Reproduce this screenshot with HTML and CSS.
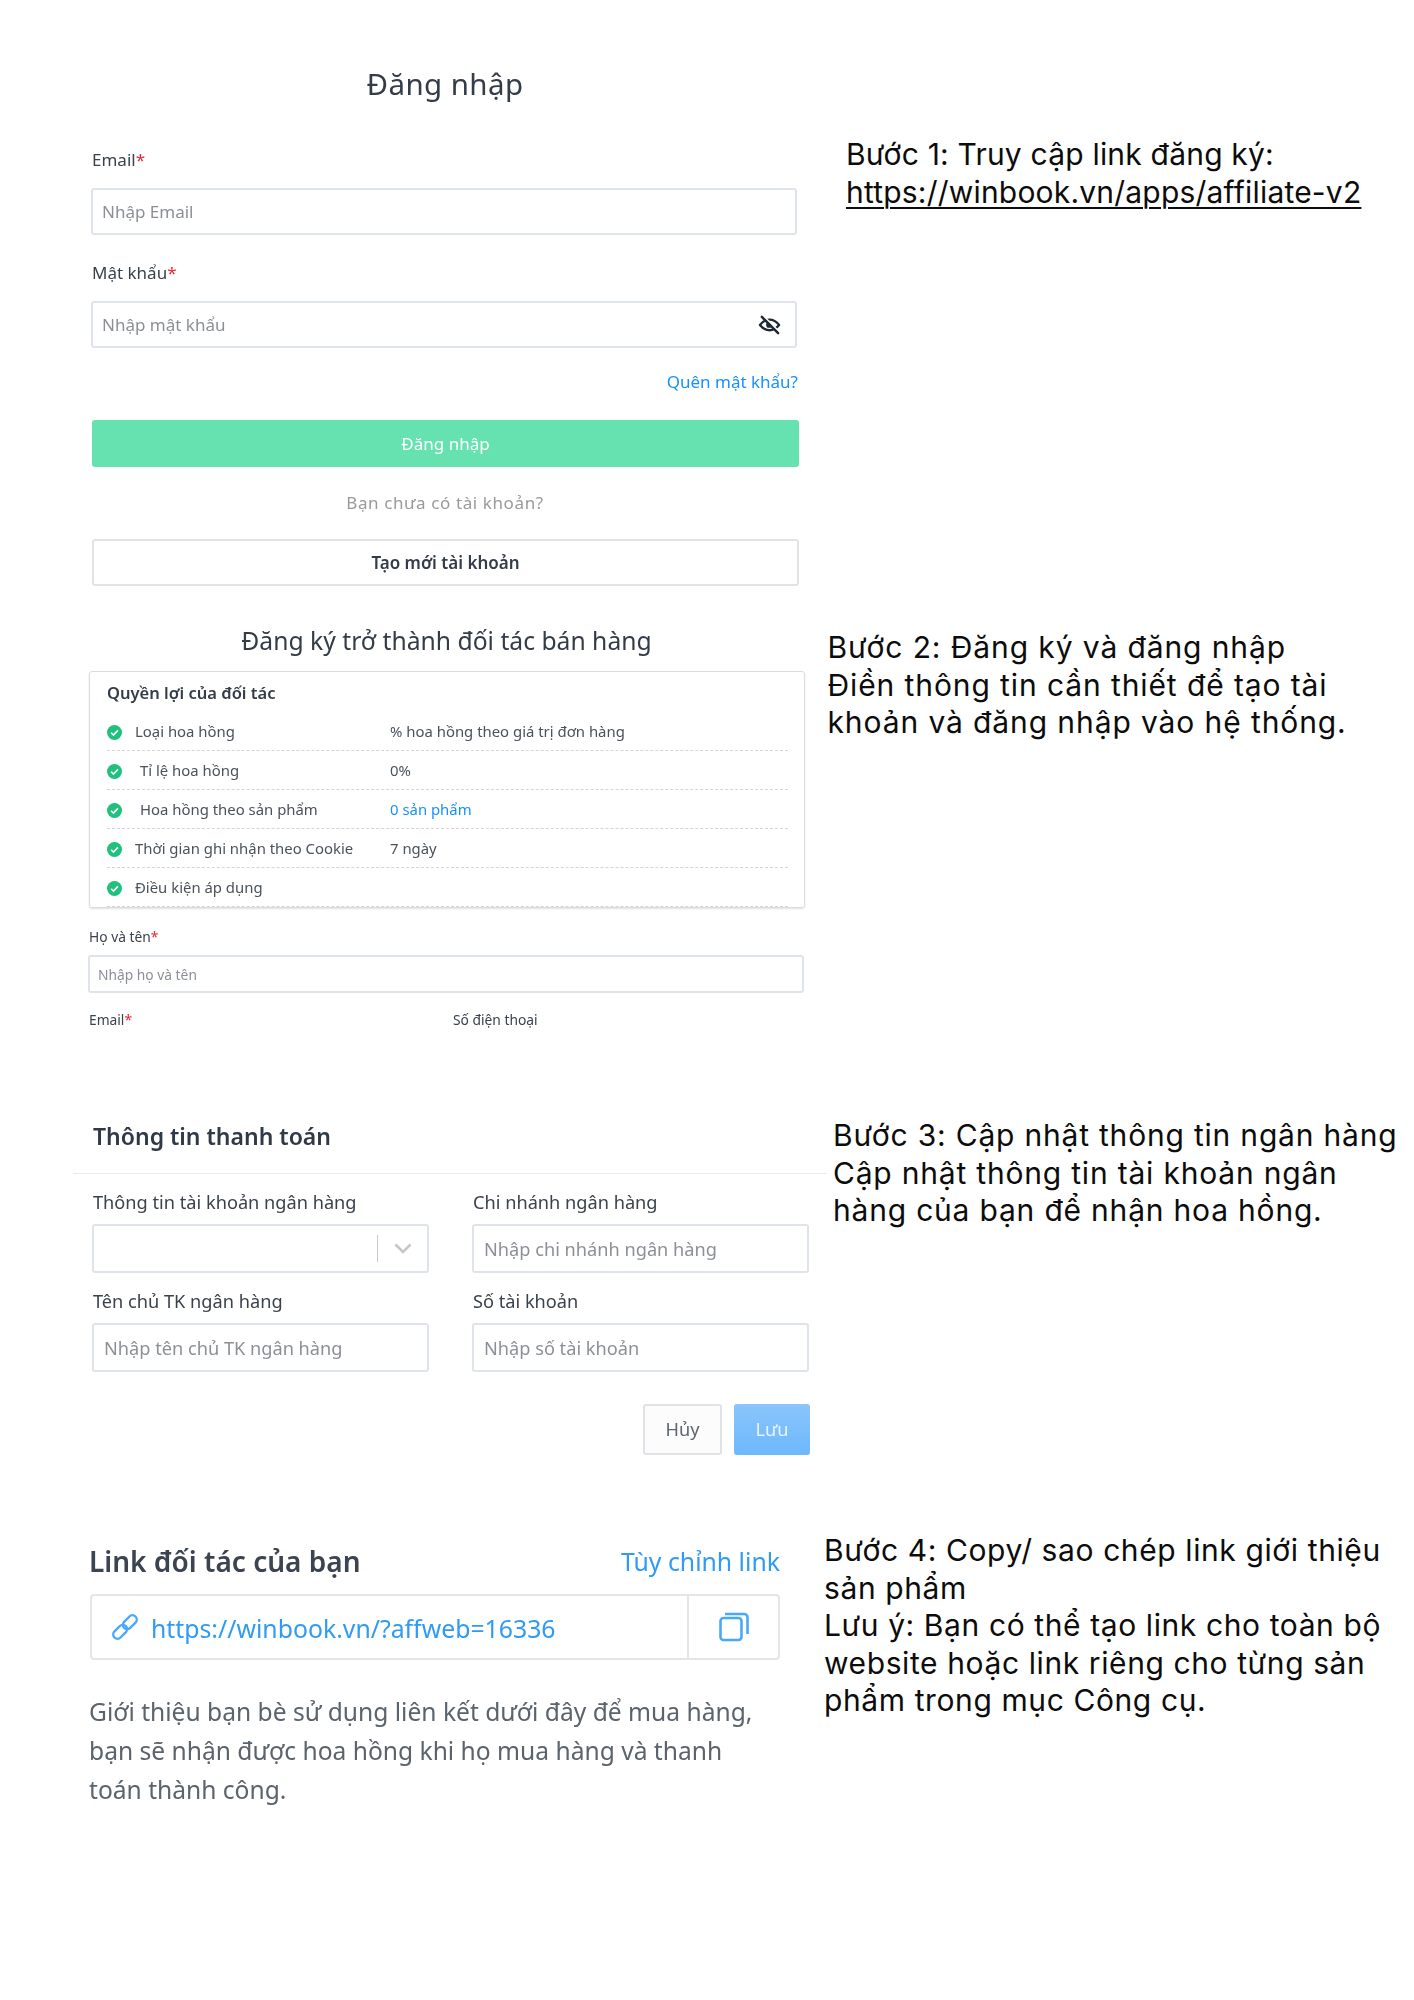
FILE: index.html
```html
<!DOCTYPE html>
<html lang="vi">
<head>
<meta charset="utf-8">
<title>Hướng dẫn đăng ký đối tác</title>
<link rel="stylesheet" href="styles.css">
</head>
<body>
<main class="page">

  <section class="step step-one">
    <div class="login">
      <h1 class="login-title">Đăng nhập</h1>
      <div class="label login-label first">Email<span class="req">*</span></div>
      <div class="field login-field">Nhập Email</div>
      <div class="label login-label">Mật khẩu<span class="req">*</span></div>
      <div class="field login-field with-icon">
        <span>Nhập mật khẩu</span>
        <svg class="eye" viewBox="0 0 24 24" width="23" height="23" fill="none" stroke-linecap="round" stroke-linejoin="round"><path d="M2 12.500c3-3.800 6.300-5.500 10-5.500s7 1.700 10 5.500c-3 3.800-6.300 5.500-10 5.500S5 16.300 2 12.500z" stroke="#1f2933" stroke-width="2.400"/><circle cx="11.500" cy="12.500" r="3" fill="#1f2933"/><path d="M6 3.500l16 16" stroke="#fff" stroke-width="2"/><path d="M4 4l17 17" stroke="#1f2933" stroke-width="2.600"/></svg>
      </div>
      <div class="forgot"><a class="link">Quên mật khẩu?</a></div>
      <div class="btn-primary">Đăng nhập</div>
      <div class="no-account">Bạn chưa có tài khoản?</div>
      <div class="btn-outline">Tạo mới tài khoản</div>
    </div>
    <div class="step-text text-one">
      <p>Bước 1: Truy cập link đăng ký:</p>
      <p class="underline">https://winbook.vn/apps/affiliate-v2</p>
    </div>
  </section>

  <section class="step step-two">
    <div class="register">
      <h2 class="register-title">Đăng ký trở thành đối tác bán hàng</h2>
      <div class="benefits">
        <h3 class="benefits-title">Quyền lợi của đối tác</h3>
        <div class="benefit">
          <svg class="check" viewBox="0 0 14 14" width="15" height="15"><circle cx="7" cy="7" r="7" fill="#20c17c"/><path d="M3.800 7.200l2.200 2.200 4.200-4.400" fill="none" stroke="#fff" stroke-width="1.500"/></svg>
          <span class="benefit-name">Loại hoa hồng</span>
          <span class="benefit-value">% hoa hồng theo giá trị đơn hàng</span>
        </div>
        <div class="benefit">
          <svg class="check" viewBox="0 0 14 14" width="15" height="15"><circle cx="7" cy="7" r="7" fill="#20c17c"/><path d="M3.800 7.200l2.200 2.200 4.200-4.400" fill="none" stroke="#fff" stroke-width="1.500"/></svg>
          <span class="benefit-name indent">Tỉ lệ hoa hồng</span>
          <span class="benefit-value">0%</span>
        </div>
        <div class="benefit">
          <svg class="check" viewBox="0 0 14 14" width="15" height="15"><circle cx="7" cy="7" r="7" fill="#20c17c"/><path d="M3.800 7.200l2.200 2.200 4.200-4.400" fill="none" stroke="#fff" stroke-width="1.500"/></svg>
          <span class="benefit-name indent">Hoa hồng theo sản phẩm</span>
          <a class="benefit-value link">0 sản phẩm</a>
        </div>
        <div class="benefit">
          <svg class="check" viewBox="0 0 14 14" width="15" height="15"><circle cx="7" cy="7" r="7" fill="#20c17c"/><path d="M3.800 7.200l2.200 2.200 4.200-4.400" fill="none" stroke="#fff" stroke-width="1.500"/></svg>
          <span class="benefit-name">Thời gian ghi nhận theo Cookie</span>
          <span class="benefit-value">7 ngày</span>
        </div>
        <div class="benefit">
          <svg class="check" viewBox="0 0 14 14" width="15" height="15"><circle cx="7" cy="7" r="7" fill="#20c17c"/><path d="M3.800 7.200l2.200 2.200 4.200-4.400" fill="none" stroke="#fff" stroke-width="1.500"/></svg>
          <span class="benefit-name">Điều kiện áp dụng</span>
        </div>
      </div>
      <div class="label small-label name-label">Họ và tên<span class="req">*</span></div>
      <div class="field small-field">Nhập họ và tên</div>
      <div class="split-labels">
        <div class="label small-label">Email<span class="req">*</span></div>
        <div class="label small-label">Số điện thoại</div>
      </div>
    </div>
    <div class="step-text text-two">
      <p>Bước 2: Đăng ký và đăng nhập</p>
      <p>Điền thông tin cần thiết để tạo tài</p>
      <p>khoản và đăng nhập vào hệ thống.</p>
    </div>
  </section>

  <section class="step step-three">
    <div class="payment">
      <h2 class="payment-title">Thông tin thanh toán</h2>
      <div class="payment-grid">
        <div class="pay-item">
          <div class="label pay-label">Thông tin tài khoản ngân hàng</div>
          <div class="field pay-field select">
            <span class="select-divider"></span>
            <svg class="chevron" viewBox="0 0 18 11" width="18" height="11" fill="none" stroke="#c6c6c6" stroke-width="2.600"><path d="M1.500 1.500L9 9l7.500-7.500"/></svg>
          </div>
        </div>
        <div class="pay-item">
          <div class="label pay-label">Chi nhánh ngân hàng</div>
          <div class="field pay-field">Nhập chi nhánh ngân hàng</div>
        </div>
        <div class="pay-item">
          <div class="label pay-label">Tên chủ TK ngân hàng</div>
          <div class="field pay-field">Nhập tên chủ TK ngân hàng</div>
        </div>
        <div class="pay-item">
          <div class="label pay-label">Số tài khoản</div>
          <div class="field pay-field">Nhập số tài khoản</div>
        </div>
      </div>
      <div class="pay-actions">
        <div class="btn-cancel">Hủy</div>
        <div class="btn-save">Lưu</div>
      </div>
    </div>
    <div class="step-text text-three">
      <p>Bước 3: Cập nhật thông tin ngân hàng</p>
      <p>Cập nhật thông tin tài khoản ngân</p>
      <p>hàng của bạn để nhận hoa hồng.</p>
    </div>
  </section>

  <section class="step step-four">
    <div class="partner">
      <div class="partner-head">
        <h2 class="partner-title">Link đối tác của bạn</h2>
        <a class="link customize">Tùy chỉnh link</a>
      </div>
      <div class="partner-box">
        <div class="partner-url">
          <svg viewBox="0 0 28 28" width="30" height="30" fill="none" stroke="#4aa8fb" stroke-width="2.200"><rect x="11" y="5.500" width="15" height="8" rx="4" transform="rotate(-45 18.500 9.500)"/><rect x="2" y="14.500" width="15" height="8" rx="4" transform="rotate(-45 9.500 18.500)"/></svg>
          <a class="link url-text">https://winbook.vn/?affweb=16336</a>
        </div>
        <div class="partner-copy">
          <svg viewBox="0 0 32 32" width="32" height="32" fill="none" stroke="#4aa8fb" stroke-width="2.600" stroke-linejoin="round"><rect x="2.500" y="7" width="21" height="22" rx="3"/><path d="M7 3h19a3.500 3.500 0 0 1 3.500 3.500V23"/></svg>
        </div>
      </div>
      <p class="partner-note">Giới thiệu bạn bè sử dụng liên kết dưới đây để mua hàng,<br>bạn sẽ nhận được hoa hồng khi họ mua hàng và thanh<br>toán thành công.</p>
    </div>
    <div class="step-text text-four">
      <p>Bước 4: Copy/ sao chép link giới thiệu</p>
      <p>sản phẩm</p>
      <p>Lưu ý: Bạn có thể tạo link cho toàn bộ</p>
      <p>website hoặc link riêng cho từng sản</p>
      <p>phẩm trong mục Công cụ.</p>
    </div>
  </section>

</main>
</body>
</html>
```
FILE: styles.css
```css
* { box-sizing: border-box; }
html, body { margin: 0; padding: 0; background: #fff; }
body { font-family: "Noto Sans", "Liberation Sans", sans-serif; color: #3a424c; }
h1, h2, h3, p { margin: 0; font-weight: 400; }

.page { width: 1414px; height: 2000px; overflow: hidden; }
.step { display: flex; align-items: flex-start; }
.step-one { height: 610px; }
.step-two { height: 480px; }
.step-three { height: 410px; }
.step-four { height: 500px; }

.step-text { font-family: "Inter", "Noto Sans", sans-serif; font-size: 30px; line-height: 37.5px; color: #0c0c0c; white-space: nowrap; letter-spacing: 0.2px; }
.underline { text-decoration: underline; text-decoration-thickness: 2px; text-underline-offset: 4px; }
.text-one { margin-left: 47px; padding-top: 136px; }
.text-two { margin-left: 22.5px; padding-top: 19px; letter-spacing: 0.9px; }
.text-three { margin-left: 6px; padding-top: 27px; letter-spacing: 0.8px; }
.text-four { margin-left: 44px; padding-top: 32px; letter-spacing: 0.6px; }

.login, .register, .payment { filter: blur(0.35px); }
.partner { filter: blur(0.55px); }

.label { color: #3a424c; }
.req { color: #f5222d; }
.link { color: #1890ff; text-decoration: none; }

.field { display: flex; align-items: center; background: #fff; border: 2px solid #dfe3ea; border-radius: 3px; color: #8c9096; }

/* login */
.login { width: 708px; margin-left: 91px; padding-top: 63px; }
.login-title { font-size: 29.5px; line-height: 42px; text-align: center; color: #333c48; letter-spacing: 0.4px; }
.login-label { padding-left: 1px; font-size: 17px; line-height: 22px; margin: 27px 0 17px; }
.login-label.first { margin-top: 44px; }
.login-field { height: 47px; margin-right: 2px; padding-left: 9px; font-size: 17px; }
.with-icon { justify-content: space-between; padding-right: 14px; }
.forgot { margin-top: 23px; padding-right: 1px; font-size: 17px; line-height: 22px; text-align: right; }
.btn-primary { height: 47px; margin: 27px 0 0 1px; background: #66e2b0; border-radius: 3px; color: #fff; font-size: 17px; line-height: 47px; text-align: center; }
.no-account { margin-top: 25px; font-size: 17px; line-height: 22px; text-align: center; color: #9a9a9a; letter-spacing: 0.6px; }
.btn-outline { height: 47px; margin: 25px 0 0 1px; border: 2px solid #e2e3e6; border-radius: 3px; font-size: 17px; font-weight: 600; line-height: 44px; text-align: center; color: #333c48; }

/* register */
.register { width: 717px; margin-left: 88px; padding-top: 11px; }
.register-title { font-size: 24.7px; line-height: 40px; text-align: center; color: #333c48; }
.benefits { height: 237px; margin: 10px 0 0 1px; padding: 10px 16px 0 17px; border: 1px solid #dcdcdc; border-radius: 3px; box-shadow: 0 1px 2px rgba(0, 0, 0, .12); overflow: hidden; }
.benefits-title { margin-bottom: 8px; font-size: 16.5px; font-weight: 600; line-height: 22px; color: #333c48; }
.benefit { display: flex; align-items: center; height: 39px; border-bottom: 1px dashed #d5d5d5; font-size: 14.9px; color: #4a525c; }
.check { flex: none; margin-top: 2px; }
.benefit-name { width: 268px; padding-left: 13px; }
.benefit-name.indent { padding-left: 18px; }
.benefit-value { flex: 1; }
.benefit-value.link { color: #1890ff; }
.small-label { font-size: 13.8px; line-height: 20px; padding-left: 1px; }
.name-label { margin: 19px 0 8px; }
.small-field { height: 38px; margin-right: 1px; padding-left: 8px; font-size: 13.8px; }
.split-labels { display: grid; grid-template-columns: 364px 1fr; margin-top: 17px; }

/* payment */
.payment { width: 754px; margin-left: 73px; padding-top: 30px; }
.payment-title { padding: 0 0 21px 20px; border-bottom: 1px solid #e9ebee; font-size: 23px; font-weight: 600; line-height: 32px; color: #2f3947; }
.payment-grid { display: grid; grid-template-columns: 337px 337px; column-gap: 43px; row-gap: 17px; padding: 17px 0 0 19px; }
.pay-label { padding-left: 1px; font-size: 18.2px; line-height: 22px; margin-bottom: 11px; }
.pay-field { height: 49px; padding-left: 10px; font-size: 18.2px; }
.select { position: relative; justify-content: flex-end; padding-right: 15px; }
.select-divider { width: 1px; height: 27px; margin-right: 16px; background: #c9c9c9; }
.pay-actions { display: flex; justify-content: flex-end; gap: 12px; margin: 32px 17px 0 0; }
.btn-cancel { width: 79px; height: 51px; border: 2px solid #e0e2e6; border-radius: 3px; background: #fcfcfc; font-size: 18.2px; line-height: 47px; text-align: center; color: #5e6670; }
.btn-save { width: 76px; height: 51px; border-radius: 3px; background: linear-gradient(#8ac5fb, #6db8fd); font-size: 18.2px; line-height: 51px; text-align: center; color: #e8f3ff; }

/* partner */
.partner { width: 690px; margin-left: 90px; padding-top: 43px; }
.partner-head { display: flex; justify-content: space-between; align-items: center; height: 36px; }
.partner-title { margin-left: -1px; font-size: 28px; font-weight: 600; line-height: 36px; color: #3b4450; }
.customize { font-size: 24.8px; line-height: 36px; color: #2f9bf5; }
.partner-box { display: flex; height: 66px; margin-top: 15px; border: 2px solid #e4e5e8; border-radius: 4px; }
.partner-url { display: flex; align-items: center; flex: 1; gap: 11px; padding-left: 18px; border-right: 2px solid #e4e5e8; }
.url-text { margin-top: 2px; font-size: 24.8px; color: #2f9bf5; }
.partner-copy { display: flex; align-items: center; justify-content: center; width: 89px; }
.partner-note { margin: 32px 0 0 -1px; font-size: 24.6px; line-height: 39px; color: #5b636d; white-space: nowrap; }
```
